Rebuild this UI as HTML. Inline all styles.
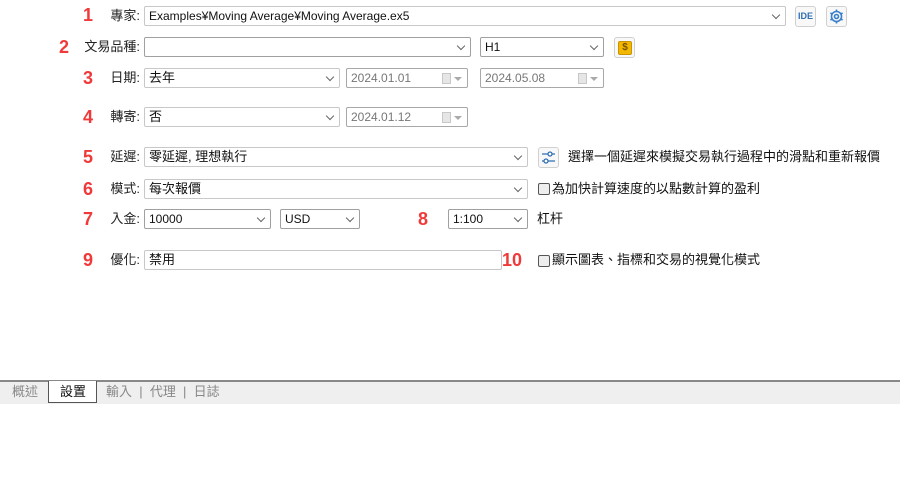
<!DOCTYPE html>
<html><head><meta charset="utf-8"><style>
*{box-sizing:border-box;margin:0;padding:0}
body{width:900px;height:500px;background:#fff;position:relative;overflow:hidden;font-family:"Liberation Sans","Noto Sans CJK TC",sans-serif;font-size:12px;color:#111}
.a{position:absolute}
.n{position:absolute;color:#f03a3a;font-weight:bold;font-size:18px;line-height:20px;font-family:"Liberation Sans",sans-serif}
.l{position:absolute;right:760px;line-height:20px;font-size:13px;color:#222}
.b{position:absolute;height:20px;border:1px solid #c8c8c8;border-radius:2px;background:#fff;line-height:18px;padding-left:4px;white-space:nowrap;overflow:hidden}
.b.dk{border-color:#a0a0a0}
.b.d{color:#777;border-color:#a8a8a8}
.c{font-size:13px}
.chev{position:absolute;right:6px;top:5px;width:6px;height:6px;border-right:1px solid #666;border-bottom:1px solid #666;transform:rotate(45deg)}
.cal{position:absolute;right:16px;top:4px;width:9px;height:11px;background:#e6e6e6;border:1px solid #c8c8c8}
.tri{position:absolute;right:5px;top:8px;border-left:4px solid transparent;border-right:4px solid transparent;border-top:4px solid #aaa}
.btn{position:absolute;width:21px;height:21px;border:1px solid #d0d0d0;border-radius:3px;background:#f8f8f8}
.cb{position:absolute;width:12px;height:12px;border:1px solid #555;border-radius:2px;background:#eee}
.t{position:absolute;line-height:20px;white-space:nowrap;font-size:13px}
</style></head><body>
<div class="n" style="left:83px;top:5px">1</div><div class="l" style="top:6px">專家:</div>
<div class="b" style="left:144px;top:6px;width:642px">Examples¥Moving Average¥Moving Average.ex5<span class="chev"></span></div>
<div class="btn" style="left:795px;top:6px;font-size:9px;font-weight:bold;color:#2f6fb5;text-align:center;line-height:19px">IDE</div>
<div class="btn" style="left:826px;top:6px"><svg width="19" height="19" viewBox="0 0 19 19"><g fill="none" stroke="#3a7fc8" stroke-width="1.6"><circle cx="9.5" cy="9.5" r="5"/><circle cx="9.5" cy="9.5" r="2"/><path d="M9.5 2.5v2M9.5 14.5v2M3.4 6l1.7 1M13.9 12l1.7 1M3.4 13l1.7-1M13.9 7l1.7-1"/></g></svg></div>

<div class="n" style="left:59px;top:37px">2</div><div class="l" style="top:37px">文易品種:</div>
<div class="b dk" style="left:144px;top:37px;width:327px"><span class="chev"></span></div>
<div class="b dk" style="left:480px;top:37px;width:124px">H1<span class="chev"></span></div>
<div class="btn" style="left:614px;top:37px"><div class="a" style="left:3px;top:3px;width:14px;height:14px;background:#f2b800;border:1px solid #c99400;border-radius:2px;color:#7a5200;font-size:10px;font-weight:bold;text-align:center;line-height:12px">$</div></div>

<div class="n" style="left:83px;top:68px">3</div><div class="l" style="top:68px">日期:</div>
<div class="b c" style="left:144px;top:68px;width:196px">去年<span class="chev"></span></div>
<div class="b d" style="left:346px;top:68px;width:122px">2024.01.01<span class="cal"></span><span class="tri"></span></div>
<div class="b d" style="left:480px;top:68px;width:124px">2024.05.08<span class="cal"></span><span class="tri"></span></div>

<div class="n" style="left:83px;top:107px">4</div><div class="l" style="top:107px">轉寄:</div>
<div class="b c" style="left:144px;top:107px;width:196px">否<span class="chev"></span></div>
<div class="b d" style="left:346px;top:107px;width:122px">2024.01.12<span class="cal"></span><span class="tri"></span></div>

<div class="n" style="left:83px;top:147px">5</div><div class="l" style="top:147px">延遲:</div>
<div class="b c" style="left:144px;top:147px;width:384px">零延遲, 理想執行<span class="chev"></span></div>
<div class="btn" style="left:538px;top:147px"><svg width="19" height="19" viewBox="0 0 19 19"><g stroke="#2f6fb5" stroke-width="1.3" fill="#fff"><path d="M3 6h13M3 13h13"/><circle cx="11" cy="6" r="2"/><circle cx="7" cy="13" r="2"/></g></svg></div>
<div class="t" style="left:568px;top:147px">選擇一個延遲來模擬交易執行過程中的滑點和重新報價</div>

<div class="n" style="left:83px;top:179px">6</div><div class="l" style="top:179px">模式:</div>
<div class="b c" style="left:144px;top:179px;width:384px">每次報價<span class="chev"></span></div>
<div class="cb" style="left:538px;top:183px"></div><div class="t" style="left:552px;top:179px">為加快計算速度的以點數計算的盈利</div>

<div class="n" style="left:83px;top:209px">7</div><div class="l" style="top:209px">入金:</div>
<div class="b dk" style="left:144px;top:209px;width:127px">10000<span class="chev"></span></div>
<div class="b dk" style="left:280px;top:209px;width:80px">USD<span class="chev"></span></div>
<div class="n" style="left:418px;top:209px">8</div>
<div class="b dk" style="left:448px;top:209px;width:80px">1:100<span class="chev"></span></div>
<div class="t" style="left:537px;top:209px">杠杆</div>

<div class="n" style="left:83px;top:250px">9</div><div class="l" style="top:250px">優化:</div>
<div class="b c" style="left:144px;top:250px;width:358px">禁用</div>
<div class="n" style="left:502px;top:250px">10</div>
<div class="cb" style="left:538px;top:255px"></div><div class="t" style="left:552px;top:250px">顯示圖表、指標和交易的視覺化模式</div>

<div class="a" style="left:0;top:380px;width:900px;height:2px;background:#888"></div>
<div class="a" style="left:0;top:382px;width:900px;height:22px;background:#efefef"></div>
<div class="a" style="left:48px;top:381px;width:49px;height:22px;background:#fff;border:1px solid #555;border-top:none"></div>
<div class="t" style="left:12px;top:382px;color:#888">概述</div>
<div class="t" style="left:60px;top:382px;color:#111">設置</div>
<div class="t" style="left:106px;top:382px;color:#888">輸入 &nbsp;| &nbsp;代理 &nbsp;| &nbsp;日誌</div>
</body></html>
